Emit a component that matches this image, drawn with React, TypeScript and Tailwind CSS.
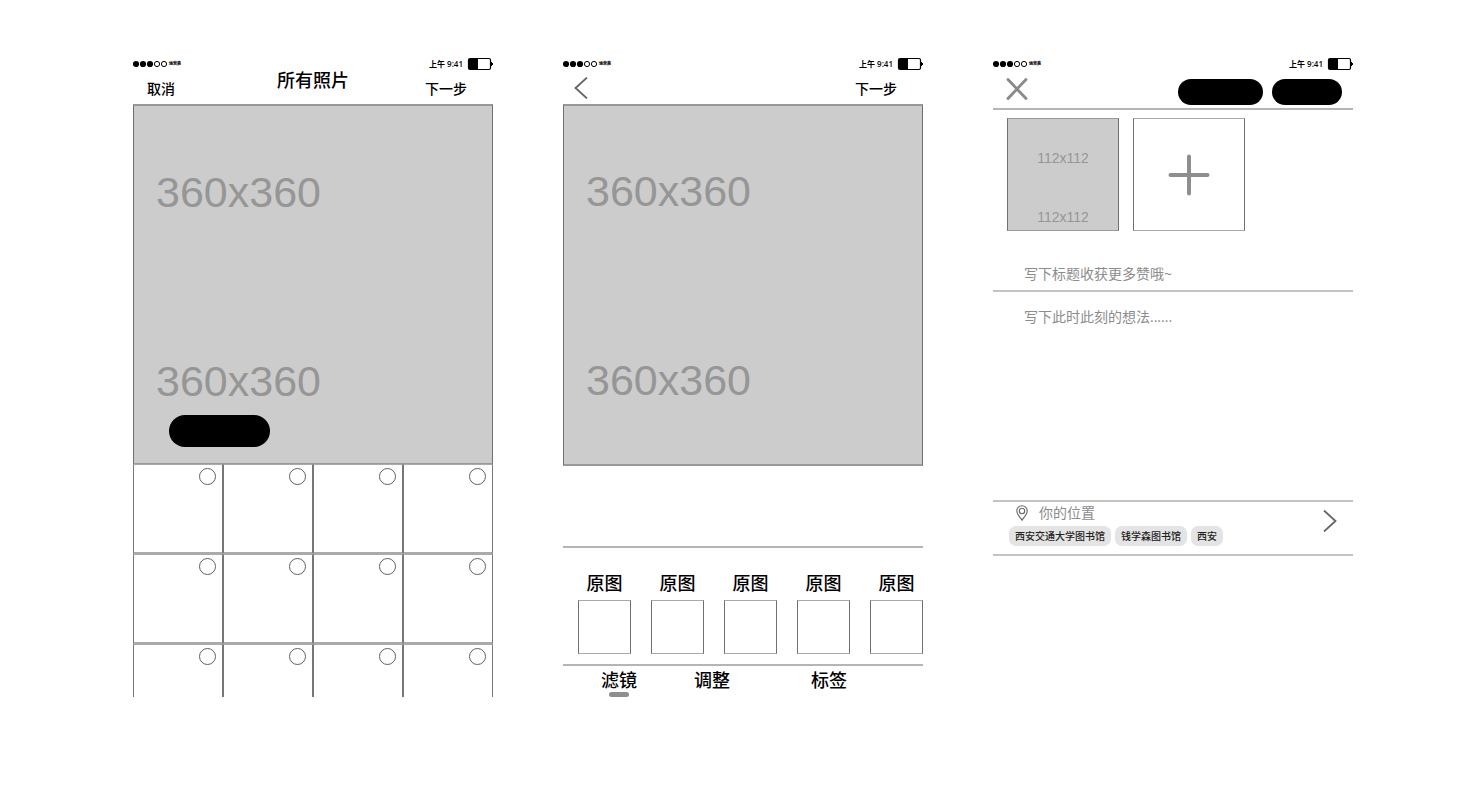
import React from "react";

function StatusBar() {
  return (
    <div className="flex h-4 items-center text-black">
      <svg width="34" height="8" viewBox="0 0 34 8" aria-hidden="true">
        <circle cx="3" cy="4" r="3.1" />
        <circle cx="10" cy="4" r="3.1" />
        <circle cx="17" cy="4" r="3.1" />
        <circle cx="24" cy="4" r="2.6" fill="none" stroke="#000" />
        <circle cx="31" cy="4" r="2.6" fill="none" stroke="#000" />
      </svg>
      <span className="ml-0.5 text-[4px] leading-4 font-black">运营商</span>
      <time className="ml-auto text-[8px] leading-4 font-semibold">上午 9:41</time>
      <svg className="ml-1" width="26" height="14" viewBox="0 0 26 14" aria-hidden="true">
        <rect x="1.5" y="1.5" width="22" height="11" rx="1.5" fill="#fff" stroke="#000" strokeWidth="1.2" />
        <rect x="2" y="2" width="9" height="10" />
        <path d="M24 5h1v1h1v2h-1v1h-1z" />
      </svg>
    </div>
  );
}

function Phone({ children }: { children: React.ReactNode }) {
  return (
    <section className="flex max-w-[360px] min-w-0 flex-1 flex-col">
      <StatusBar />
      {children}
    </section>
  );
}

function Preview({ children }: { children?: React.ReactNode }) {
  return (
    <div className="flex h-full flex-col items-start gap-[133px] pl-[22px] font-['Liberation_Sans_Narrow','Liberation_Sans',sans-serif] text-[43px] leading-[56px] text-[#969696]">
      <span>360x360</span>
      <div className="flex flex-col">
        <span>360x360</span>
        {children}
      </div>
    </div>
  );
}

const cells = Array.from({ length: 12 }, (_, i) => i);

function PhotoPicker() {
  return (
    <Phone>
      <header className="flex h-8 items-center justify-between pr-[26px] pl-[14px] font-medium">
        <button className="w-[54px] pt-0.5 text-left text-[14px] leading-5">取消</button>
        <h1 className="pb-4 text-[18px] leading-6">所有照片</h1>
        <button className="pt-0.5 text-[14px] leading-5">下一步</button>
      </header>
      <div className="h-[360px] border-x border-t-2 border-b border-x-[#707070] border-y-[#999] bg-[#ccc] pt-[58px]">
        <Preview>
          <button aria-label="多选" className="mt-[6px] ml-[13px] h-8 w-[101px] rounded-full bg-black" />
        </Preview>
      </div>
      <div className="grid h-[233px] auto-rows-[90px] grid-cols-4 overflow-hidden">
        {cells.map((i) => (
          <label
            key={i}
            className="flex items-start justify-end border-x border-t border-b-2 border-x-[#777] border-y-[#aaa] pt-[3px] pr-[6px]"
          >
            <input
              type="checkbox"
              aria-label={`照片 ${i + 1}`}
              className="size-[17px] appearance-none rounded-full border border-[#606060] checked:bg-black"
            />
          </label>
        ))}
      </div>
    </Phone>
  );
}

const filters = [0, 1, 2, 3, 4];

function FilterEditor() {
  return (
    <Phone>
      <header className="flex h-8 items-center justify-between pr-[26px] pl-[11px] font-medium">
        <button aria-label="返回">
          <svg width="14" height="22" viewBox="0 0 14 22" fill="none" stroke="#666" strokeWidth="1.8">
            <path d="M13 0.5L1.5 11L13 21.5" />
          </svg>
        </button>
        <button className="pt-0.5 text-[14px] leading-5">下一步</button>
      </header>
      <div className="h-[362px] border-x border-y-2 border-x-[#707070] border-y-[#999] bg-[#ccc] pt-[57px]">
        <Preview />
      </div>
      <div className="mt-20 flex h-[120px] justify-between border-y-2 border-[#b5b5b5] pt-[23px] pl-[15px]">
        {filters.map((i) => (
          <button key={i} className="flex w-[53px] flex-col items-center gap-[5px]">
            <span className="text-[18px] leading-6 font-medium">原图</span>
            <span className="h-[54px] w-full border border-x-[#707070] border-y-[#aaa]" />
          </button>
        ))}
      </div>
      <nav className="flex pl-[38px] text-[18px] leading-6 font-medium">
        <button className="mr-[57px] flex flex-col items-center pt-0.5">
          滤镜
          <span className="h-[5px] w-5 rounded-full bg-[#8f8d8e]" />
        </button>
        <button className="mr-[81px] self-start pt-0.5">调整</button>
        <button className="self-start pt-0.5">标签</button>
      </nav>
    </Phone>
  );
}

const places = ["西安交通大学图书馆", "钱学森图书馆", "西安"];

function Composer() {
  return (
    <Phone>
      <header className="flex h-[38px] items-center border-b-2 border-[#b5b5b5] pr-[11px] pl-[13px]">
        <button aria-label="关闭" className="mb-0.5 mr-auto">
          <svg width="22" height="22" viewBox="0 0 22 22" fill="none" stroke="#8a8889" strokeWidth="2.8" strokeLinecap="round">
            <path d="M2 1.5L20 20.5M20 1.5L2 20.5" />
          </svg>
        </button>
        <div className="mt-[3px] flex gap-[9px]">
          <button aria-label="存草稿" className="h-[26px] w-[85px] rounded-full bg-black" />
          <button aria-label="发布" className="h-[26px] w-[70px] rounded-full bg-black" />
        </div>
      </header>
      <div className="mt-2 flex gap-[14px] pl-[14px]">
        <div className="flex h-[113px] w-28 flex-col items-center gap-[39px] border border-x-[#707070] border-y-[#999] bg-[#ccc] pt-[29px] font-['Liberation_Sans_Narrow','Liberation_Sans',sans-serif] text-[14px] leading-5 text-[#969696]">
          <span>112x112</span>
          <span>112x112</span>
        </div>
        <button aria-label="添加照片" className="flex h-[113px] w-28 items-center justify-center border border-x-[#707070] border-y-[#aaa]">
          <svg width="42" height="42" viewBox="0 0 42 42" stroke="#8f8d8e" strokeWidth="4" strokeLinecap="round">
            <path d="M21 2.5V39.5M2.5 21H39.5" />
          </svg>
        </button>
      </div>
      <input
        aria-label="标题"
        placeholder="写下标题收获更多赞哦~"
        className="mt-[27px] h-[34px] border-b-2 border-[#c3c3c3] pb-0.5 pl-[31px] text-[14px] leading-5 outline-none placeholder:text-[#8c8c8c]"
      />
      <textarea
        aria-label="想法"
        placeholder="写下此时此刻的想法......"
        className="h-[208px] resize-none pt-[15px] pl-[31px] text-[14px] leading-5 outline-none placeholder:text-[#8c8c8c]"
      />
      <div className="flex h-14 items-center border-y-2 border-[#c3c3c3] pr-4 pl-4">
        <div className="flex flex-1 flex-col self-stretch">
          <div className="flex h-[21px] items-center gap-[11px] pl-[7px] text-[14px] leading-5 text-[#8c8c8c]">
            <svg width="12" height="16" viewBox="0 0 12 16" fill="none" stroke="#666" strokeWidth="1.1">
              <path d="M6 15.2C4.3 12.4 0.8 9.4 0.8 5.9a5.2 5.2 0 0 1 10.4 0C11.2 9.4 7.7 12.4 6 15.2z" />
              <circle cx="6" cy="6" r="2.7" />
            </svg>
            你的位置
          </div>
          <div className="mt-[3px] flex gap-1">
            {places.map((p) => (
              <button key={p} className="h-5 rounded-[7px] bg-[#e4e4e4] px-[6px] text-[10px] leading-5 font-medium text-[#222]">
                {p}
              </button>
            ))}
          </div>
        </div>
        <button aria-label="选择位置" className="mb-3.5">
          <svg width="14" height="22" viewBox="0 0 14 22" fill="none" stroke="#666" strokeWidth="1.8">
            <path d="M1 0.5L12.5 11L1 21.5" />
          </svg>
        </button>
      </div>
    </Phone>
  );
}

export default function App() {
  return (
    <main className="flex min-h-screen items-start justify-center gap-[70px] bg-white pt-14 pb-10 pl-[9px] font-['Open_Sans','Noto_Sans_CJK_SC',sans-serif] text-black">
      <PhotoPicker />
      <FilterEditor />
      <Composer />
    </main>
  );
}
